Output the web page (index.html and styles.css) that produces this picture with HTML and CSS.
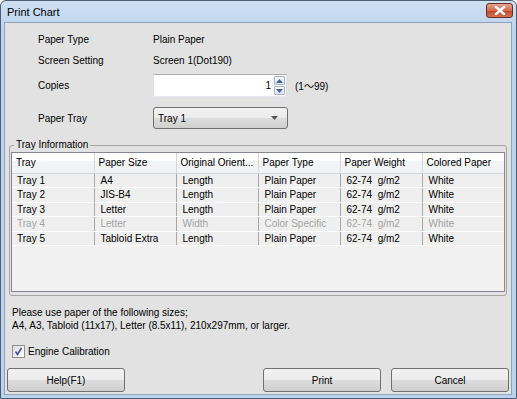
FILE: index.html
```html
<!DOCTYPE html>
<html>
<head>
<meta charset="utf-8">
<link rel="stylesheet" href="styles.css">
</head>
<body>
<div class="window">
  <div class="titlebar">
    <span class="title">Print Chart</span>
    <span class="close"><svg width="12" height="9" viewBox="0 0 12 9"><path d="M2 1 L10 8 M10 1 L2 8" stroke="#fff" stroke-width="2.4" stroke-linecap="square"/></svg></span>
  </div>
  <div class="client">
    <div class="fields">
      <div class="row r1"><span class="lbl">Paper Type</span><span>Plain Paper</span></div>
      <div class="row r2"><span class="lbl">Screen Setting</span><span>Screen 1(Dot190)</span></div>
      <div class="row r3"><span class="lbl">Copies</span>
        <div class="spin"><span class="num">1</span>
          <div class="arrows">
            <span class="ab"><svg width="7" height="4" viewBox="0 0 7 4"><path d="M0 4 L3.5 0 L7 4 Z" fill="#4a6190"/></svg></span>
            <span class="ab"><svg width="7" height="4" viewBox="0 0 7 4"><path d="M0 0 L3.5 4 L7 0 Z" fill="#4a6190"/></svg></span>
          </div>
        </div>
        <span class="range">(1～99)</span>
      </div>
      <div class="row r4"><span class="lbl">Paper Tray</span>
        <div class="combo"><span>Tray 1</span><svg width="7" height="4" viewBox="0 0 7 4"><path d="M0 0 L3.5 4 L7 0 Z" fill="#555"/></svg></div>
      </div>
    </div>
    <fieldset class="group">
      <legend>Tray Information</legend>
      <div class="lv">
        <table>
          <thead>
            <tr><th>Tray</th><th>Paper Size</th><th>Original Orient...</th><th>Paper Type</th><th>Paper Weight</th><th>Colored Paper</th></tr>
          </thead>
          <tbody>
            <tr><td>Tray 1</td><td>A4</td><td>Length</td><td>Plain Paper</td><td>62-74&nbsp; g/m2</td><td>White</td></tr>
            <tr><td>Tray 2</td><td>JIS-B4</td><td>Length</td><td>Plain Paper</td><td>62-74&nbsp; g/m2</td><td>White</td></tr>
            <tr><td>Tray 3</td><td>Letter</td><td>Length</td><td>Plain Paper</td><td>62-74&nbsp; g/m2</td><td>White</td></tr>
            <tr class="dis"><td>Tray 4</td><td>Letter</td><td>Width</td><td>Color Specific</td><td>62-74&nbsp; g/m2</td><td>White</td></tr>
            <tr><td>Tray 5</td><td>Tabloid Extra</td><td>Length</td><td>Plain Paper</td><td>62-74&nbsp; g/m2</td><td>White</td></tr>
          </tbody>
        </table>
      </div>
    </fieldset>
    <div class="note">
      <div>Please use paper of the following sizes;</div>
      <div>A4, A3, Tabloid (11x17), Letter (8.5x11), 210x297mm, or larger.</div>
    </div>
    <label class="check">
      <span class="box"><svg width="9" height="9" viewBox="0 0 9 9"><path d="M1.5 4.5 L3.5 7.5 L7.5 1" fill="none" stroke="#3f5597" stroke-width="1.6"/></svg></span>
      <span>Engine Calibration</span>
    </label>
    <div class="buttons">
      <button class="btn help">Help(F1)</button>
      <span class="spacer"></span>
      <button class="btn">Print</button>
      <button class="btn">Cancel</button>
    </div>
  </div>
</div>
</body>
</html>
```

FILE: styles.css
```css
* { box-sizing: border-box; }
html, body { margin: 0; padding: 0; background: #ffffff; }
body {
  font-family: "Liberation Sans", "Noto Sans CJK JP", sans-serif;
  font-size: 10px;
  color: #000;
}
.window {
  width: 517px;
  height: 399px;
  border: 1px solid #4b5e74;
  border-radius: 6px 6px 0 0;
  background: linear-gradient(#cfe0f3, #bcd3ec 30px, #bcd3ec);
  padding: 0 4px 3px 3px;
  display: flex;
  flex-direction: column;
}
.titlebar {
  height: 21px;
  display: flex;
  align-items: center;
  justify-content: space-between;
  padding-left: 3px;
  flex: none;
}
.title { font-size: 11px; color: #000; }
.close {
  width: 27px;
  height: 15px;
  margin-top: -3px;
  margin-right: -1px;
  border: 1px solid #6b2d23;
  border-radius: 3px;
  background: linear-gradient(#e6a48f, #d16a4f 50%, #bf4526 51%, #d27454);
  display: flex;
  align-items: center;
  justify-content: center;
}
.client {
  flex: 1;
  background: #e2e2e2;
  border: 1px solid #8fa3bb;
  display: flex;
  flex-direction: column;
}
.fields { padding: 6px 0 0 33px; }
.row { display: flex; align-items: center; }
.lbl { width: 115px; flex: none; }
.r1, .r2 { height: 21px; }
.r3 { height: 23px; margin-top: 3px; }
.r4 { height: 22px; margin-top: 10px; }
.spin {
  width: 134px;
  height: 23px;
  background: #fff;
  border: 1px solid #abadb3;
  border-color: #abadb3 #dbdfe6 #e3e9ef #e2e3ea;
  display: flex;
  align-items: center;
  justify-content: flex-end;
  padding: 1px;
}
.num { padding-right: 3px; }
.arrows {
  width: 11px;
  height: 19px;
  display: flex;
  flex-direction: column;
  gap: 1px;
}
.ab {
  flex: 1;
  border: 1px solid #a9b5c8;
  border-radius: 1px;
  background: linear-gradient(#f4f7fb, #dfe6f0);
  display: flex;
  align-items: center;
  justify-content: center;
}
.range { margin-left: 8px; }
.combo {
  width: 135px;
  height: 22px;
  border: 1px solid #707070;
  border-radius: 3px;
  background: linear-gradient(#f2f2f2, #ebebeb 50%, #dddddd 51%, #cfcfcf);
  display: flex;
  align-items: center;
  justify-content: space-between;
  padding: 0 9px 0 4px;
}
.group {
  margin: 10px 4px 0 4px;
  padding: 1px 1px 3px 1px;
  border: 1px solid #a5a5a5;
  border-radius: 3px;
  min-width: 0;
}
.group legend {
  padding: 0 2px;
  margin-left: 3px;
  line-height: 12px;
}
.lv {
  height: 140px;
  border: 1px solid #828790;
  background: #f1f1f1;
  overflow: hidden;
}
.lv table {
  border-collapse: collapse;
  table-layout: fixed;
  width: 492px;
}
.lv th {
  width: 82px;
  height: 20px;
  font-weight: normal;
  text-align: left;
  padding: 0 0 0 4px;
  background: linear-gradient(#ffffff, #ffffff 40%, #f3f4f6 41%, #f1f2f4);
  border-right: 1px solid #d5d5d5;
  border-bottom: 1px solid #d5d5d5;
  white-space: nowrap;
  overflow: hidden;
}
.lv td {
  height: 14.5px;
  padding: 0 0 0 6px;
  line-height: 13px;
  background: #efefef;
  border-right: 1px solid #a8a8a8;
  border-bottom: 1px solid #ffffff;
  white-space: nowrap;
  overflow: hidden;
}
.lv td:first-child { padding-left: 5px; }
.lv tr.dis td { color: #a3a3a3; }
.note { margin-top: 10px; padding-left: 7px; line-height: 13px; }
.check {
  display: flex;
  align-items: center;
  gap: 3px;
  margin-top: 12px;
  padding-left: 7px;
  height: 14px;
}
.box {
  width: 13px;
  height: 13px;
  border: 1px solid #8e8f8f;
  background: linear-gradient(135deg, #dcdcdc, #ffffff);
  display: flex;
  align-items: center;
  justify-content: center;
}
.buttons {
  display: flex;
  margin-top: 10px;
  padding: 0 2px 0 2px;
  gap: 10px;
}
.spacer { flex: 1; }
.btn {
  width: 118px;
  height: 24px;
  font-family: inherit;
  font-size: 10px;
  color: #000;
  border: 1px solid #707070;
  border-radius: 3px;
  background: linear-gradient(#f2f2f2, #ebebeb 50%, #dddddd 51%, #cfcfcf);
  padding: 0;
}
```
